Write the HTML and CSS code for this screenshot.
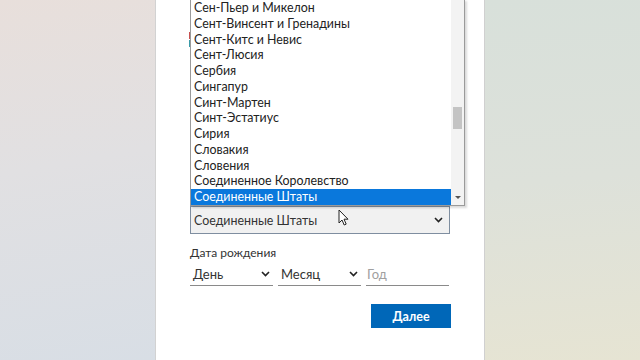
FILE: index.html
```html
<!DOCTYPE html>
<html lang="ru">
<head>
<meta charset="utf-8">
<link rel="stylesheet" href="styles.css">
</head>
<body>
<div class="page">
  <div class="side side-left"></div>
  <main class="card">
    <div class="hidden-area">
      <span class="mark mark-red"></span>
      <span class="mark mark-teal"></span>
    </div>
    <div class="country">
      <div class="listbox">
        <ul class="options">
          <li>Сен-Пьер и Микелон</li>
          <li>Сент-Винсент и Гренадины</li>
          <li>Сент-Китс и Невис</li>
          <li>Сент-Люсия</li>
          <li>Сербия</li>
          <li>Сингапур</li>
          <li>Синт-Мартен</li>
          <li>Синт-Эстатиус</li>
          <li>Сирия</li>
          <li>Словакия</li>
          <li>Словения</li>
          <li>Соединенное Королевство</li>
          <li class="selected">Соединенные Штаты</li>
        </ul>
        <div class="scrollbar">
          <div class="thumb"></div>
          <svg class="arrow-down" width="6" height="4" viewBox="0 0 6 4"><path d="M0 0h6L3 3z" fill="#555"/></svg>
        </div>
      </div>
      <div class="select-box">
        <span>Соединенные Штаты</span>
        <svg class="chev" width="9" height="6" viewBox="0 0 9 6"><path d="M1 1l3.5 3.5L8 1" fill="none" stroke="#222" stroke-width="1.6"/></svg>
      </div>
      <svg class="cursor" width="12" height="18" viewBox="0 0 12 18"><path d="M1 1v13l3-3 2.2 5 2-0.9-2.2-4.9H10z" fill="#fff" stroke="#222" stroke-width="1" stroke-linejoin="round"/></svg>
    </div>
    <div class="birth">
      <div class="label">Дата рождения</div>
      <div class="birth-row">
        <div class="field"><span>День</span><svg class="chev" width="9" height="6" viewBox="0 0 9 6"><path d="M1 1l3.5 3.5L8 1" fill="none" stroke="#222" stroke-width="1.6"/></svg></div>
        <div class="field"><span>Месяц</span><svg class="chev" width="9" height="6" viewBox="0 0 9 6"><path d="M1 1l3.5 3.5L8 1" fill="none" stroke="#222" stroke-width="1.6"/></svg></div>
        <div class="field"><span class="placeholder">Год</span></div>
      </div>
    </div>
    <div class="actions">
      <button class="next">Далее</button>
    </div>
  </main>
  <div class="side side-right"></div>
</div>
</body>
</html>
```
FILE: styles.css
```css
* { box-sizing: border-box; }
html, body { margin: 0; padding: 0; }
body {
  width: 640px;
  height: 360px;
  overflow: hidden;
  font-family: Lato, "Noto Sans", sans-serif;
}
.page {
  display: grid;
  grid-template-columns: 155px 330px 1fr;
  height: 360px;
}
.side-left {
  background: linear-gradient(170deg, #e8dfdb 0%, #e1e0e2 45%, #d8dee5 100%);
}
.side-right {
  background: linear-gradient(175deg, #d8e0da 0%, #dde1da 50%, #e6e4d3 100%);
}
.card {
  background: #fff;
  border-left: 1px solid #d2d2d2;
  border-right: 1px solid #d0d0d0;
  padding: 0 34px 0 34px;
  display: flex;
  flex-direction: column;
}
.hidden-area {
  height: 206px;
  position: relative;
  flex: none;
}
.mark {
  position: absolute;
  left: -1px;
  width: 2px;
  height: 7px;
}
.mark-red { top: 32px; background: #c85050; }
.mark-teal { top: 40px; background: #3a9aa8; }
.country {
  position: relative;
  width: 260px;
}
.listbox {
  position: absolute;
  left: 0;
  bottom: 100%;
  width: 275px;
  height: 207px;
  background: #fff;
  border: 1px solid #9a9a9a;
  border-top: none;
  box-shadow: 2px 2px 2px rgba(0,0,0,0.15);
  display: flex;
  z-index: 2;
}
.options {
  list-style: none;
  margin: 0;
  padding: 1px 0 0 0;
  width: 260px;
  font-size: 12.4px;
  color: #222;
}
.options li {
  height: 15.75px;
  line-height: 15.75px;
  padding-left: 3px;
  white-space: nowrap;
}
.options li.selected {
  background: #0a78dc;
  color: #fff;
}
.scrollbar {
  flex: 1;
  background: #f3f3f3;
  position: relative;
}
.thumb {
  position: absolute;
  left: 2px;
  right: 2px;
  top: 108px;
  height: 22px;
  background: #c4c4c4;
}
.arrow-down {
  position: absolute;
  left: 4px;
  bottom: 5px;
}
.select-box {
  height: 28px;
  border: 1px solid #7f8ea0;
  background: #f1f1f1;
  display: flex;
  align-items: center;
  justify-content: space-between;
  padding: 0 6px 0 3px;
  font-size: 12.4px;
  color: #333;
}
.cursor {
  position: absolute;
  left: 148px;
  top: 3px;
  z-index: 3;
}
.birth {
  margin-top: 12px;
}
.label {
  font-size: 12px;
  color: #333;
  line-height: 14px;
}
.birth-row {
  margin-top: 2px;
  display: grid;
  grid-template-columns: 83px 83px 83px;
  column-gap: 5px;
}
.field {
  height: 24px;
  border-bottom: 1px solid #8a8a8a;
  display: flex;
  align-items: center;
  justify-content: space-between;
  padding: 0 3px 0 3px;
  font-size: 13px;
  color: #333;
}
.placeholder { color: #a0a0a0; margin-left: -2px; }
.actions {
  margin-top: 18px;
  display: flex;
  justify-content: flex-end;
  width: 261px;
}
.next {
  width: 80px;
  height: 24px;
  border: none;
  background: #0067b8;
  color: #fff;
  font-family: Lato, "Noto Sans", sans-serif;
  font-size: 12.5px;
  font-weight: 700;
  padding: 0;
}
```
